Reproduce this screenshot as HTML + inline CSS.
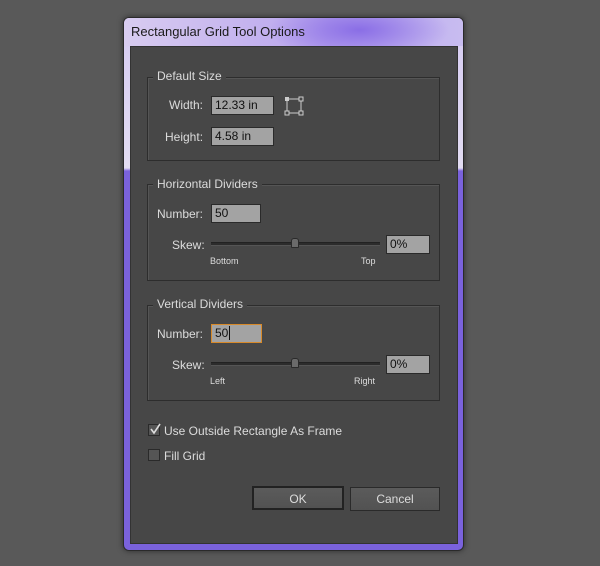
<!DOCTYPE html>
<html><head><style>
*{margin:0;padding:0;box-sizing:border-box}
body{width:600px;height:566px;background:#595959;position:relative;overflow:hidden;font-family:"Liberation Sans",sans-serif;font-size:12px;color:#d8d8d8}
.a{position:absolute}
.frame{left:123px;top:17px;width:341px;height:534px;border:1px solid #2a2a2a;border-radius:6px;background:linear-gradient(180deg,#e4dcf4 0px,#c9b8f0 10px,#d8cef2 30px,#e2dcf2 150px,#7a62dc 153px,#7a62dc 100%);box-shadow:0 0 6px rgba(0,0,0,.5)}
.tb{left:124px;top:18px;width:339px;height:28px;border-radius:5px 5px 0 0;background:radial-gradient(ellipse 90px 30px at 235px 12px,#8a6ee6,rgba(160,140,235,0) 100%),linear-gradient(90deg,#d8ccf0,#b8a4ee 60%,#c8bcf0)}
.title{left:131px;top:24px;font-size:13px;color:#1a1a1a}
.bodyp{left:130px;top:46px;width:328px;height:498px;background:#474747;border:1px solid #333}
.grp{border:1px solid #2d2d2d;box-shadow:1px 1px 0 #555 inset}
.lg{background:#474747;padding:0 4px;color:#dcdcdc}
.in{background:#a3a3a3;border:1px solid #2a2a2a;color:#111;padding:1px 3px;font-size:12px;line-height:15px;height:19px}
.lab{color:#dcdcdc}
.tr{height:4px;background:#2c2c2c;border-top:1px solid #222;border-bottom:1px solid #555}
.th{width:8px;height:10px;background:#6a6a6a;border:1px solid #2a2a2a;border-radius:3px 3px 1px 1px}
.sm{font-size:9px;color:#dcdcdc}
.btn{height:24px;border:1px solid #2a2a2a;background:linear-gradient(#5b5b5b,#525252);color:#dcdcdc;text-align:center;line-height:22px}
</style></head><body>
<div class="a frame"></div>
<div class="a tb"></div>
<div class="a title">Rectangular Grid Tool Options</div>
<div class="a bodyp"></div>

<div class="a grp" style="left:147px;top:77px;width:293px;height:84px"></div>
<div class="a lg" style="left:153px;top:69px">Default Size</div>
<div class="a lab" style="left:169px;top:98px">Width:</div>
<div class="a in" style="left:211px;top:96px;width:63px">12.33 in</div>
<svg class="a" style="left:284px;top:96px" width="20" height="20"><rect x="3" y="3" width="14" height="14" fill="none" stroke="#ccc"/><rect x="1" y="1" width="4" height="4" fill="#ccc"/><rect x="15" y="1" width="4" height="4" fill="#474747" stroke="#ccc"/><rect x="1" y="15" width="4" height="4" fill="#474747" stroke="#ccc"/><rect x="15" y="15" width="4" height="4" fill="#474747" stroke="#ccc"/></svg>
<div class="a lab" style="left:165px;top:130px">Height:</div>
<div class="a in" style="left:211px;top:127px;width:63px">4.58 in</div>

<div class="a grp" style="left:147px;top:184px;width:293px;height:97px"></div>
<div class="a lg" style="left:153px;top:177px">Horizontal Dividers</div>
<div class="a lab" style="left:157px;top:207px">Number:</div>
<div class="a in" style="left:211px;top:204px;width:50px">50</div>
<div class="a lab" style="left:172px;top:238px">Skew:</div>
<div class="a tr" style="left:211px;top:242px;width:169px"></div>
<div class="a th" style="left:291px;top:238px"></div>
<div class="a in" style="left:386px;top:235px;width:44px">0%</div>
<div class="a sm" style="left:210px;top:256px">Bottom</div>
<div class="a sm" style="left:361px;top:256px">Top</div>

<div class="a grp" style="left:147px;top:305px;width:293px;height:96px"></div>
<div class="a lg" style="left:153px;top:297px">Vertical Dividers</div>
<div class="a lab" style="left:157px;top:327px">Number:</div>
<div class="a in" style="left:211px;top:324px;width:51px;border-color:#d88a2a">50<span style="border-left:1px solid #111;margin-left:1px"></span></div>
<div class="a lab" style="left:172px;top:358px">Skew:</div>
<div class="a tr" style="left:211px;top:362px;width:169px"></div>
<div class="a th" style="left:291px;top:358px"></div>
<div class="a in" style="left:386px;top:355px;width:44px">0%</div>
<div class="a sm" style="left:210px;top:376px">Left</div>
<div class="a sm" style="left:354px;top:376px">Right</div>

<div class="a" style="left:148px;top:424px;width:12px;height:12px;border:1px solid #2a2a2a;background:#555"></div>
<svg class="a" style="left:148px;top:422px" width="14" height="14"><path d="M3 7 L6 11 L12 2" fill="none" stroke="#ddd" stroke-width="1.6"/></svg>
<div class="a lab" style="left:164px;top:424px">Use Outside Rectangle As Frame</div>
<div class="a" style="left:148px;top:449px;width:12px;height:12px;border:1px solid #2a2a2a;background:#555"></div>
<div class="a lab" style="left:164px;top:449px">Fill Grid</div>

<div class="a btn" style="left:252px;top:486px;width:92px;border:2px solid #222">OK</div>
<div class="a btn" style="left:350px;top:487px;width:90px">Cancel</div>
</body></html>
